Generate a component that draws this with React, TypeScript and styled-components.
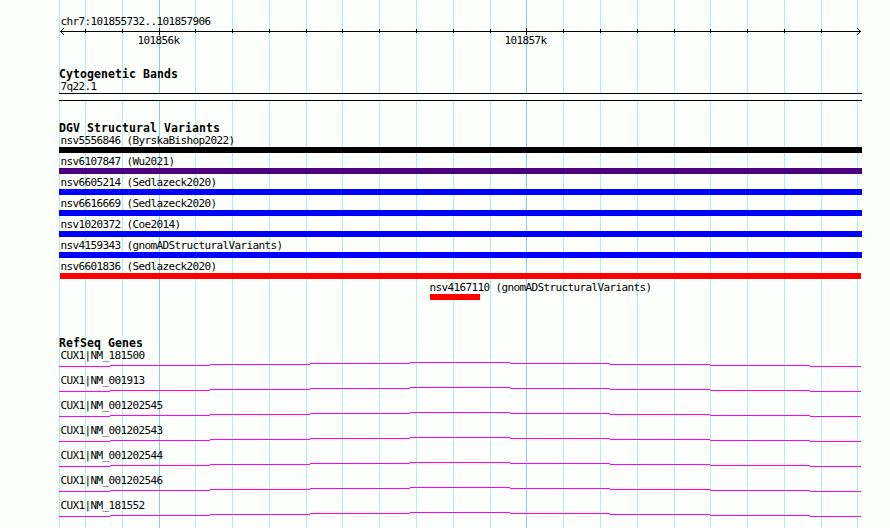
import React from "react";
import styled, { createGlobalStyle } from "styled-components";

interface Variant {
  name: string;
  color: string;
  start: number;
  end: number;
}

// positions are pixels from the left edge of the panel
const PANEL_LEFT = 59;
const PANEL_WIDTH = 803;

const gridLines = [
  0, 26, 63, 100, 136, 173, 210, 247, 283, 320, 357, 394, 431, 467, 504, 541,
  578, 615, 651, 688, 725, 762, 798,
];

const majorTicks = [
  { x: 100, label: "101856k" },
  { x: 467, label: "101857k" },
];

const variants: Variant[] = [
  { name: "nsv5556846 (ByrskaBishop2022)", color: "#000000", start: 0, end: 803 },
  { name: "nsv6107847 (Wu2021)", color: "#4b0082", start: 0, end: 803 },
  { name: "nsv6605214 (Sedlazeck2020)", color: "#0000ff", start: 0, end: 803 },
  { name: "nsv6616669 (Sedlazeck2020)", color: "#0000ff", start: 0, end: 803 },
  { name: "nsv1020372 (Coe2014)", color: "#0000ff", start: 0, end: 803 },
  { name: "nsv4159343 (gnomADStructuralVariants)", color: "#0000ff", start: 0, end: 803 },
  { name: "nsv6601836 (Sedlazeck2020)", color: "#ff0000", start: 1, end: 802 },
  { name: "nsv4167110 (gnomADStructuralVariants)", color: "#ff0000", start: 371, end: 421 },
];

const genes = [
  "CUX1|NM_181500",
  "CUX1|NM_001913",
  "CUX1|NM_001202545",
  "CUX1|NM_001202543",
  "CUX1|NM_001202544",
  "CUX1|NM_001202546",
  "CUX1|NM_181552",
];

// the intron climbs one pixel per step to the middle and back down
const intronSteps = [0, 51, 151, 251, 351, 451, 551, 651, 751, 802];

const isMajor = (x: number) => majorTicks.some((tick) => tick.x === x);

const GridLines: React.FC = () => (
  <Grid width={PANEL_WIDTH} height={528} shapeRendering="crispEdges">
    {gridLines.map((x) => (
      <rect key={x} x={x} y={0} width={1} height={528} fill={isMajor(x) ? "#87ceeb" : "#afeeee"} />
    ))}
  </Grid>
);

const Scale: React.FC = () => (
  <Axis width={PANEL_WIDTH} height={20}>
    <g shapeRendering="crispEdges">
      <rect x={1} y={3} width={801} height={1} />
      {gridLines.slice(1, -1).map((x) => (
        <rect key={x} x={x} y={isMajor(x) ? 0 : 1} width={1} height={isMajor(x) ? 7 : 4} />
      ))}
      {[1, 2, 3].map((step) => (
        <React.Fragment key={step}>
          <rect x={1 + step} y={3 - step} width={1} height={1} />
          <rect x={1 + step} y={3 + step} width={1} height={1} />
          <rect x={801 - step} y={3 - step} width={1} height={1} />
          <rect x={801 - step} y={3 + step} width={1} height={1} />
        </React.Fragment>
      ))}
    </g>
    {majorTicks.map((tick) => (
      <text key={tick.x} x={tick.x - 21.6} y={16}>
        {tick.label}
      </text>
    ))}
  </Axis>
);

const Intron: React.FC = () => (
  <IntronShape width={PANEL_WIDTH} height={5} shapeRendering="crispEdges">
    {intronSteps.slice(0, -1).map((x, index) => (
      <rect key={x} x={x} y={Math.abs(4 - index)} width={intronSteps[index + 1] - x} height={1} />
    ))}
  </IntronShape>
);

const App: React.FC = () => {
  return (
    <>
      <GlobalStyle />
      <Panel>
        <GridLines />
        <Region>chr7:101855732..101857906</Region>
        <Scale />

        <Track $gap={20}>
          <Title>Cytogenetic Bands</Title>
          <Label>7q22.1</Label>
          <Band />
        </Track>

        <Track $gap={21}>
          <Title>DGV Structural Variants</Title>
          {variants.map((variant) => (
            <VariantRow key={variant.name} $start={variant.start}>
              <Label $shift={variant.start > 1 ? -0.6 : 1.4 - variant.start}>{variant.name}</Label>
              <Bar $color={variant.color} $width={variant.end - variant.start} />
            </VariantRow>
          ))}
        </Track>

        <Track $gap={37}>
          <Title>RefSeq Genes</Title>
          {genes.map((gene) => (
            <GeneRow key={gene}>
              <Label>{gene}</Label>
              <Intron />
            </GeneRow>
          ))}
        </Track>
      </Panel>
    </>
  );
};

const GlobalStyle = createGlobalStyle`
  body {
    margin: 0;
    background: #fcfffc;
    overflow: hidden;
  }
`;

const Panel = styled.div`
  position: relative;
  box-sizing: border-box;
  width: 890px;
  height: 528px;
  padding: 15px 0 0 ${PANEL_LEFT}px;
  overflow: hidden;
  color: #000;
  font-family: "DejaVu Sans Mono", "Liberation Mono", monospace;
  font-size: 11px;
  line-height: 13px;
  letter-spacing: -0.622px;
  white-space: pre;
`;

const Grid = styled.svg`
  position: absolute;
  top: 0;
  left: ${PANEL_LEFT}px;
  z-index: -1;
`;

const Region = styled.div`
  height: 13px;
  margin-left: 1.4px;
`;

const Axis = styled.svg`
  display: block;
  overflow: visible;
`;

const Track = styled.section<{ $gap: number }>`
  display: flex;
  flex-direction: column;
  width: ${PANEL_WIDTH}px;
  margin-top: ${(props) => props.$gap}px;
`;

const Title = styled.h2`
  height: 10px;
  margin: 0;
  font-size: 11.5px;
  font-weight: bold;
  letter-spacing: 0.077px;
`;

const Label = styled.div<{ $shift?: number }>`
  height: 13px;
  padding-top: 2px;
  margin-left: ${(props) => props.$shift ?? 1.4}px;
`;

const Band = styled.div`
  height: 6px;
  border: solid #000;
  border-width: 1px 0;
  background: #fcfffc;
`;

const VariantRow = styled.div<{ $start: number }>`
  height: 21px;
  padding-left: ${(props) => props.$start}px;
`;

const Bar = styled.div<{ $color: string; $width: number }>`
  width: ${(props) => props.$width}px;
  height: 6px;
  background: ${(props) => props.$color};
`;

const GeneRow = styled.div`
  height: 25px;
  flex-shrink: 0;
`;

const IntronShape = styled.svg`
  display: block;
  fill: #ff00ff;
`;

export default App;
